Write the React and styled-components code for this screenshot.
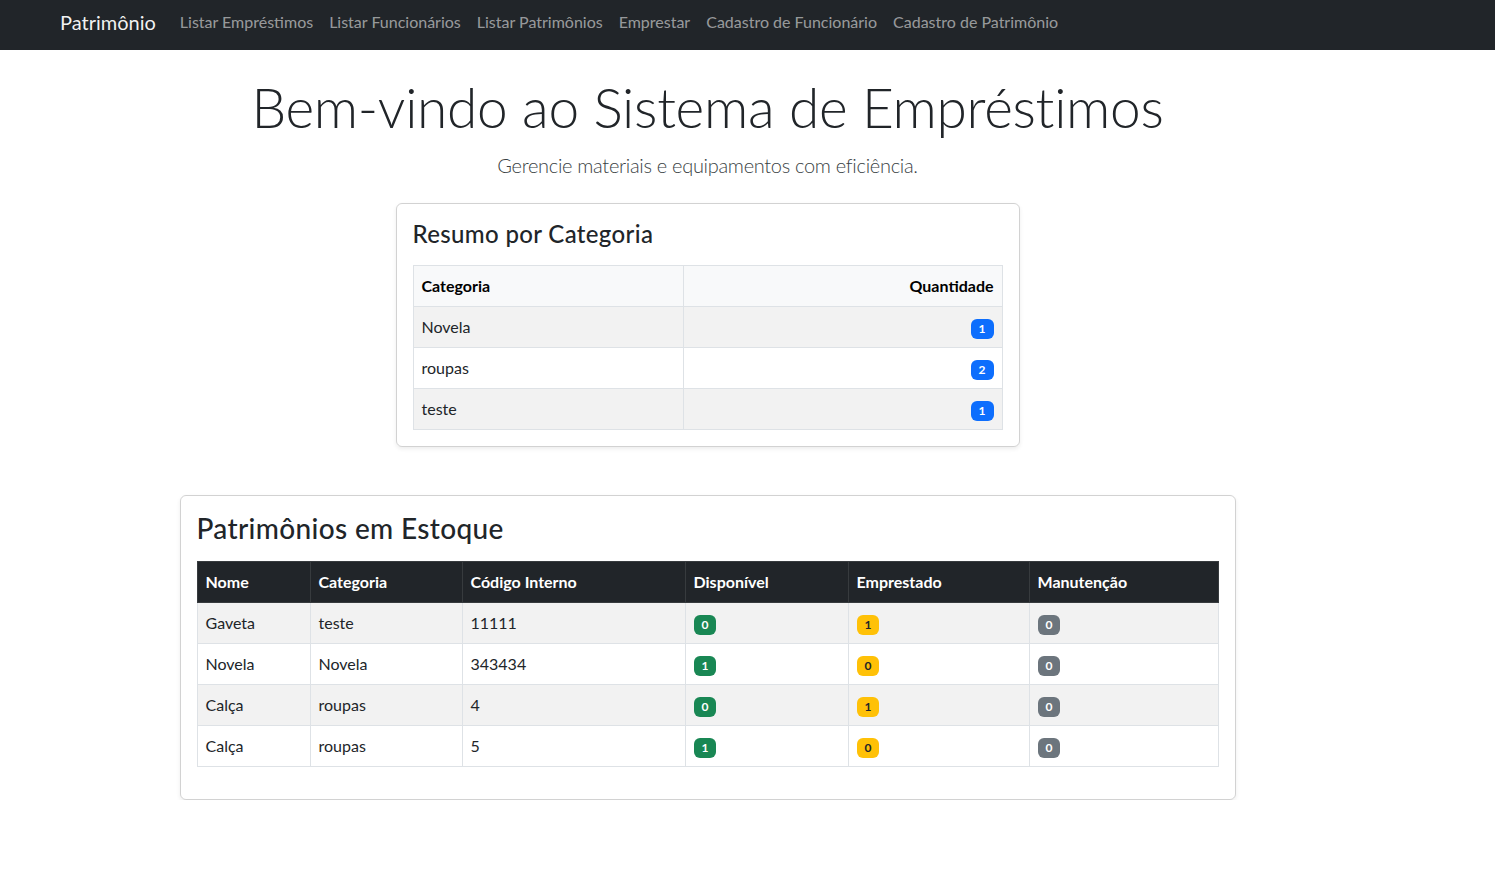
import styled, { createGlobalStyle } from "styled-components"

const GlobalStyle = createGlobalStyle`
    * { box-sizing: border-box; }
    body {
        margin: 0;
        font-family: Lato, "Noto Sans", "Liberation Sans", sans-serif;
        font-size: 16px;
        line-height: 1.5;
        color: #212529;
        background: #fff;
    }
`

const NavBar = styled.nav`
    height: 50px;
    background-color: #212529;
    display: flex;
    align-items: center;
    padding: 0 60px 6px;
`

const Brand = styled.a`
    font-size: 20px;
    color: rgba(255, 255, 255, 0.95);
    margin-right: 16px;
    text-decoration: none;
`

const NavLinks = styled.div`
    display: flex;
`

const NavLink = styled.a`
    padding: 0 8px;
    color: rgba(255, 255, 255, 0.55);
    text-decoration: none;
`

const Main = styled.main`
    width: 1415px;
    display: flex;
    flex-direction: column;
    align-items: center;
    padding-top: 24px;
`

const Title = styled.h1`
    margin: 0;
    font-size: 55px;
    font-weight: 300;
    line-height: 1.2;
    letter-spacing: -0.3px;
`

const Lead = styled.p`
    margin: 10px 0 0;
    font-size: 20px;
    font-weight: 300;
    letter-spacing: -0.3px;
    color: #3a3f44;
`

const Card = styled.section`
    width: ${(p) => p.$width}px;
    margin-top: ${(p) => p.$top}px;
    border: 1px solid rgba(0, 0, 0, 0.175);
    border-radius: 6px;
    box-shadow: 0 2px 4px rgba(0, 0, 0, 0.075);
    padding: 16px;
`

const CardTitle = styled.h2`
    margin: 0 0 16px;
    font-size: ${(p) => p.$size}px;
    font-weight: 500;
    line-height: 1.2;
    letter-spacing: 0.35px;
`

const Table = styled.table`
    width: 100%;
    border-collapse: collapse;
    margin-bottom: ${(p) => (p.$spaced ? "16px" : "0")};
    table-layout: fixed;

    tbody tr:nth-child(odd) td {
        background-color: #f2f2f2;
    }
`

const Th = styled.th`
    width: ${(p) => p.$width || "auto"};
    padding: 8px;
    text-align: ${(p) => p.$align || "left"};
    font-weight: 700;
    border: 1px solid ${(p) => (p.$dark ? "#373b3e" : "#dee2e6")};
    background-color: ${(p) => (p.$dark ? "#212529" : "#f8f9fa")};
    color: ${(p) => (p.$dark ? "#fff" : "#000")};
`

const Td = styled.td`
    padding: 8px;
    text-align: ${(p) => p.$align || "left"};
    border: 1px solid #dee2e6;
    background-color: #fff;
`

const badgeColors = {
    primary: ["#0d6efd", "#fff"],
    success: ["#198754", "#fff"],
    warning: ["#ffc107", "#212529"],
    secondary: ["#6c757d", "#fff"],
}

const Badge = styled.span`
    display: inline-block;
    padding: 4px 8px;
    font-size: 12px;
    font-weight: 700;
    line-height: 1;
    border-radius: 6px;
    background-color: ${(p) => badgeColors[p.$tone][0]};
    color: ${(p) => badgeColors[p.$tone][1]};
    vertical-align: baseline;
`

const links = [
    "Listar Empréstimos",
    "Listar Funcionários",
    "Listar Patrimônios",
    "Emprestar",
    "Cadastro de Funcionário",
    "Cadastro de Patrimônio",
]

const resumo = [
    { categoria: "Novela", qtd: 1 },
    { categoria: "roupas", qtd: 2 },
    { categoria: "teste", qtd: 1 },
]

const estoque = [
    { nome: "Gaveta", categoria: "teste", codigo: "11111", disp: 0, emp: 1, man: 0 },
    { nome: "Novela", categoria: "Novela", codigo: "343434", disp: 1, emp: 0, man: 0 },
    { nome: "Calça", categoria: "roupas", codigo: "4", disp: 0, emp: 1, man: 0 },
    { nome: "Calça", categoria: "roupas", codigo: "5", disp: 1, emp: 0, man: 0 },
]

export default function App() {
    return (
        <>
            <GlobalStyle />
            <NavBar>
                <Brand href="#">Patrimônio</Brand>
                <NavLinks>
                    {links.map((l) => (
                        <NavLink key={l} href="#">{l}</NavLink>
                    ))}
                </NavLinks>
            </NavBar>
            <Main>
                <Title>Bem-vindo ao Sistema de Empréstimos</Title>
                <Lead>Gerencie materiais e equipamentos com eficiência.</Lead>

                <Card $width={624} $top={23}>
                    <CardTitle $size={24}>Resumo por Categoria</CardTitle>
                    <Table>
                        <thead>
                            <tr>
                                <Th $width="46%">Categoria</Th>
                                <Th $align="right">Quantidade</Th>
                            </tr>
                        </thead>
                        <tbody>
                            {resumo.map((r) => (
                                <tr key={r.categoria}>
                                    <Td>{r.categoria}</Td>
                                    <Td $align="right">
                                        <Badge $tone="primary">{r.qtd}</Badge>
                                    </Td>
                                </tr>
                            ))}
                        </tbody>
                    </Table>
                </Card>

                <Card $width={1056} $top={48}>
                    <CardTitle $size={28}>Patrimônios em Estoque</CardTitle>
                    <Table $spaced>
                        <thead>
                            <tr>
                                <Th $dark $width="113px">Nome</Th>
                                <Th $dark $width="152px">Categoria</Th>
                                <Th $dark $width="223px">Código Interno</Th>
                                <Th $dark $width="163px">Disponível</Th>
                                <Th $dark $width="181px">Emprestado</Th>
                                <Th $dark>Manutenção</Th>
                            </tr>
                        </thead>
                        <tbody>
                            {estoque.map((r) => (
                                <tr key={r.codigo}>
                                    <Td>{r.nome}</Td>
                                    <Td>{r.categoria}</Td>
                                    <Td>{r.codigo}</Td>
                                    <Td><Badge $tone="success">{r.disp}</Badge></Td>
                                    <Td><Badge $tone="warning">{r.emp}</Badge></Td>
                                    <Td><Badge $tone="secondary">{r.man}</Badge></Td>
                                </tr>
                            ))}
                        </tbody>
                    </Table>
                </Card>
            </Main>
        </>
    )
}
